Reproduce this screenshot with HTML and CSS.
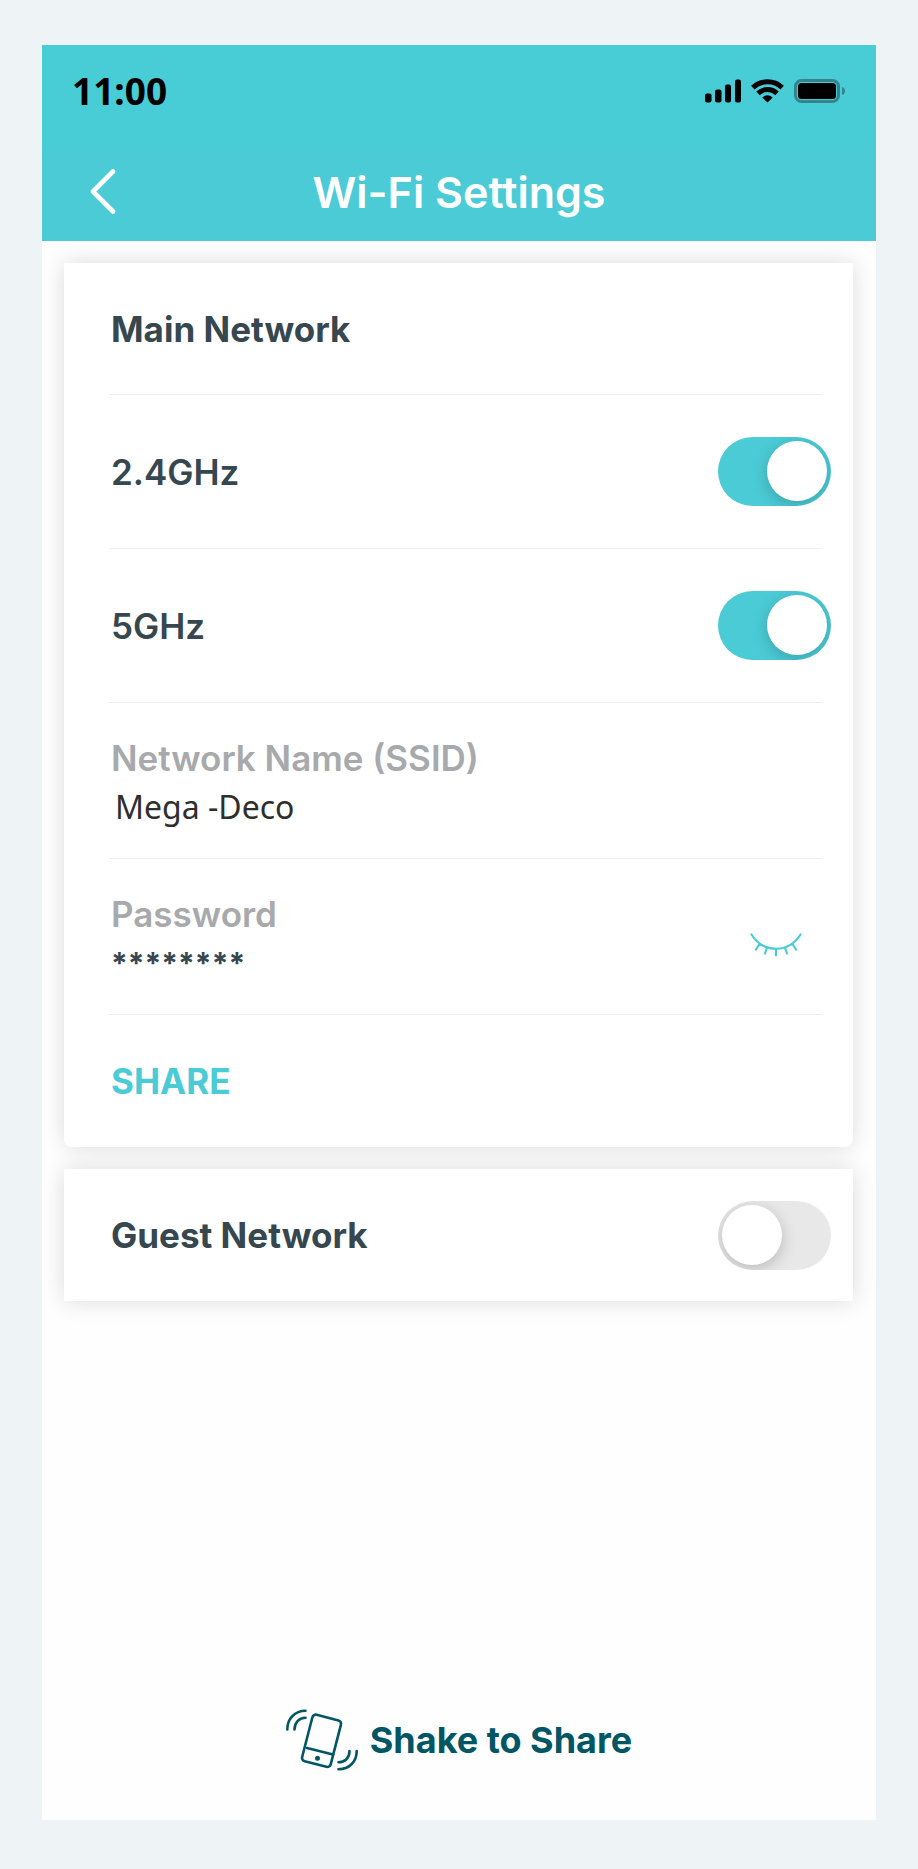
FILE: index.html
```html
<!DOCTYPE html>
<html lang="en">

<head>
    <meta charset="UTF-8">
    <meta name="viewport" content="width=device-width, initial-scale=1.0">
    <title>Wi-Fi Settings</title>
    <link rel="stylesheet" href="styles.css">
</head>

<body>
    <div class="phone">
        <div class="status-bar">
            <span class="time">11:00</span>
            <div class="status-icons">
                <svg class="signal" width="36" height="24" viewBox="0 0 36 24">
                    <rect x="0" y="14.5" width="6.5" height="9" rx="2" />
                    <rect x="10" y="10.5" width="6.5" height="13" rx="2" />
                    <rect x="20" y="5.5" width="6" height="18" rx="2" />
                    <rect x="30" y="0.5" width="6" height="23" rx="2" />
                </svg>
                <svg class="wifi" width="33" height="24" viewBox="0 0 33 24">
                    <path d="M1.8 8.6 A21.5 21.5 0 0 1 31.2 8.6" />
                    <path d="M7 14.4 A13.8 13.8 0 0 1 26 14.4" />
                    <path class="wifi-dot" d="M11.3 18.6 Q16.5 13.8 21.7 18.6 L16.5 23.6 Z" />
                </svg>
                <svg class="battery" width="51" height="24" viewBox="0 0 51 24">
                    <rect class="battery-case" x="1.5" y="1.5" width="43" height="21" rx="6" />
                    <rect x="4" y="4" width="38" height="16" rx="3.5" />
                    <path class="battery-tip" d="M48 8 Q51 9 51 12 Q51 15 48 16 Z" />
                </svg>
            </div>
        </div>

        <header class="header">
            <button class="back" type="button" aria-label="Back">
                <svg width="26" height="45" viewBox="0 0 26 45">
                    <path d="M23 2.5 L3 22.5 L23 42.5" />
                </svg>
            </button>
            <h1>Wi-Fi Settings</h1>
        </header>

        <main class="content">
            <section class="card card-main">
                <div class="row row-title">
                    <h2>Main Network</h2>
                </div>
                <div class="row">
                    <label class="band" for="band24">2.4GHz</label>
                    <input class="switch" type="checkbox" id="band24" checked>
                </div>
                <div class="row">
                    <label class="band" for="band5">5GHz</label>
                    <input class="switch" type="checkbox" id="band5" checked>
                </div>
                <div class="row row-field">
                    <div class="field">
                        <label for="ssid">Network Name (SSID)</label>
                        <input class="ssid" type="text" id="ssid" value="Mega -Deco">
                    </div>
                </div>
                <div class="row row-field">
                    <div class="field">
                        <label for="password">Password</label>
                        <input class="password" type="text" id="password" value="********" readonly>
                    </div>
                    <button class="reveal" type="button" aria-label="Show password">
                        <svg width="52" height="24" viewBox="0 0 52 24">
                            <path d="M1.5 1.5 C13.5 20.5 38.5 20.5 50.5 1.5 M9.5 11 L6 16.5 M17 14.5 L15 20.5 M26 16 V22.5 M35 14.5 L37 20.5 M42.5 11 L46 16.5" />
                        </svg>
                    </button>
                </div>
                <div class="row row-title">
                    <button class="share" type="button">SHARE</button>
                </div>
            </section>

            <section class="card">
                <div class="row row-title">
                    <h2><label for="guest">Guest Network</label></h2>
                    <input class="switch" type="checkbox" id="guest">
                </div>
            </section>
        </main>

        <footer class="footer">
            <button class="shake" type="button">
                <svg width="72" height="62" viewBox="0 0 72 62">
                    <rect x="20.8" y="7.8" width="29.5" height="48" rx="3.5" transform="rotate(14.5 35.5 31.8)" />
                    <path d="M21 39 L47 45.5" />
                    <circle cx="31.5" cy="49.3" r="1.2" />
                    <path d="M1.3 20.5 C1.3 9.5 9 1.8 19.5 1.8 M8.5 20.5 C8.5 13.5 13 8.8 19.5 8.8" />
                    <path d="M70.7 42 C70.7 53 63 60.3 52.5 60.3 M63.5 42 C63.5 49 59 53.3 52.5 53.3" />
                </svg>
                <span>Shake to Share</span>
            </button>
        </footer>
    </div>
</body>

</html>
```

FILE: styles.css
```css
* {
    margin: 0;
    padding: 0;
    box-sizing: border-box;
}

body {
    display: flex;
    min-height: 100vh;
    padding: 45px 42px 49px;
    background-color: #eef3f6;
    font-family: Inter, "Liberation Sans", sans-serif;
    font-size: 35px;
    line-height: 40px;
    color: #36474f;
}

button,
input {
    border: none;
    background: none;
    font: inherit;
    color: inherit;
}

button {
    cursor: pointer;
}

svg {
    display: block;
}

.phone {
    flex: 1;
    display: flex;
    flex-direction: column;
    background-color: #fefefe;
}

/* Top bars */
.status-bar {
    display: flex;
    align-items: center;
    justify-content: space-between;
    padding: 26px 31px 37px 30px;
    background-color: #48cdd6;
    color: black;
}

.time {
    font-family: "Noto Sans", sans-serif;
    font-size: 37px;
    font-weight: 700;
}

.status-icons {
    display: flex;
    align-items: center;
    gap: 10px;
}

.wifi path {
    fill: none;
    stroke: black;
    stroke-width: 5;
}

.wifi .wifi-dot {
    fill: black;
    stroke: none;
}

.battery-case {
    fill: none;
    stroke: #33848c;
    stroke-width: 3;
}

.battery-tip {
    fill: #33848c;
}

.header {
    display: grid;
    grid-template-columns: 80px 1fr 80px;
    align-items: center;
    padding: 18px 0 23px;
    background-color: #4bcbd6;
    color: white;
}

.header h1 {
    font-size: 43px;
    font-weight: 600;
    line-height: 52px;
    text-align: center;
}

.back {
    justify-self: end;
    padding: 0 6px 2px;
}

.back path {
    fill: none;
    stroke: white;
    stroke-width: 4.6;
    stroke-linecap: round;
    stroke-linejoin: round;
}

/* Cards */
.content {
    display: flex;
    flex-direction: column;
    gap: 22px;
    padding: 22px 23px 22px 22px;
}

.card {
    background-color: white;
    box-shadow: 0 0 22px rgba(0, 0, 0, 0.14);
}

.card-main {
    border-radius: 0 0 8px 8px;
}

.row {
    display: flex;
    align-items: center;
    justify-content: space-between;
    min-height: 154px;
    margin: 0 31px 0 45px;
    padding-left: 2px;
    border-bottom: 1px solid #eeeeee;
}

.row:last-child {
    border-bottom: none;
}

.row-title {
    min-height: 132px;
}

.row h2 {
    font-size: 35px;
    font-weight: 700;
}

.band {
    font-weight: 600;
}

.switch {
    appearance: none;
    flex: none;
    width: 113px;
    height: 69px;
    margin-right: -9px;
    padding: 4px;
    border-radius: 35px;
    background-color: #e8e8e8;
    overflow: hidden;
    cursor: pointer;
}

.switch::before {
    content: "";
    display: block;
    width: 60px;
    height: 60px;
    border-radius: 50%;
    background-color: white;
    box-shadow: 0 4px 16px rgba(0, 0, 0, 0.2);
}

.switch:checked {
    background-color: #4bcbd6;
}

.switch:checked::before {
    margin-left: auto;
}

.row-field {
    min-height: 156px;
    padding-top: 4px;
}

.field {
    flex: 1;
    display: flex;
    flex-direction: column;
    gap: 9px;
}

.field label {
    font-weight: 600;
    color: #a7a9ac;
}

.field input {
    width: 100%;
    height: 40px;
}

.field .ssid {
    padding-left: 4px;
    font-family: "Noto Sans", sans-serif;
    font-size: 32px;
    color: #2e2e2e;
}

.field .password {
    font-size: 30px;
    font-weight: 700;
}

.reveal {
    padding: 12px 20px 0 0;
}

.reveal path {
    fill: none;
    stroke: #4bcbd6;
    stroke-width: 2.2;
    stroke-linecap: round;
}

.share {
    font-weight: 700;
    color: #4bcbd6;
}

/* Bottom action */
.footer {
    display: flex;
    justify-content: center;
    margin-top: auto;
    padding-bottom: 49px;
}

.shake {
    display: flex;
    align-items: center;
    gap: 12px;
    font-size: 36px;
    font-weight: 700;
    color: #005662;
}

.shake svg {
    fill: none;
    stroke: #005662;
    stroke-width: 2.6;
    stroke-linecap: round;
}

.shake circle {
    fill: #005662;
}
```
